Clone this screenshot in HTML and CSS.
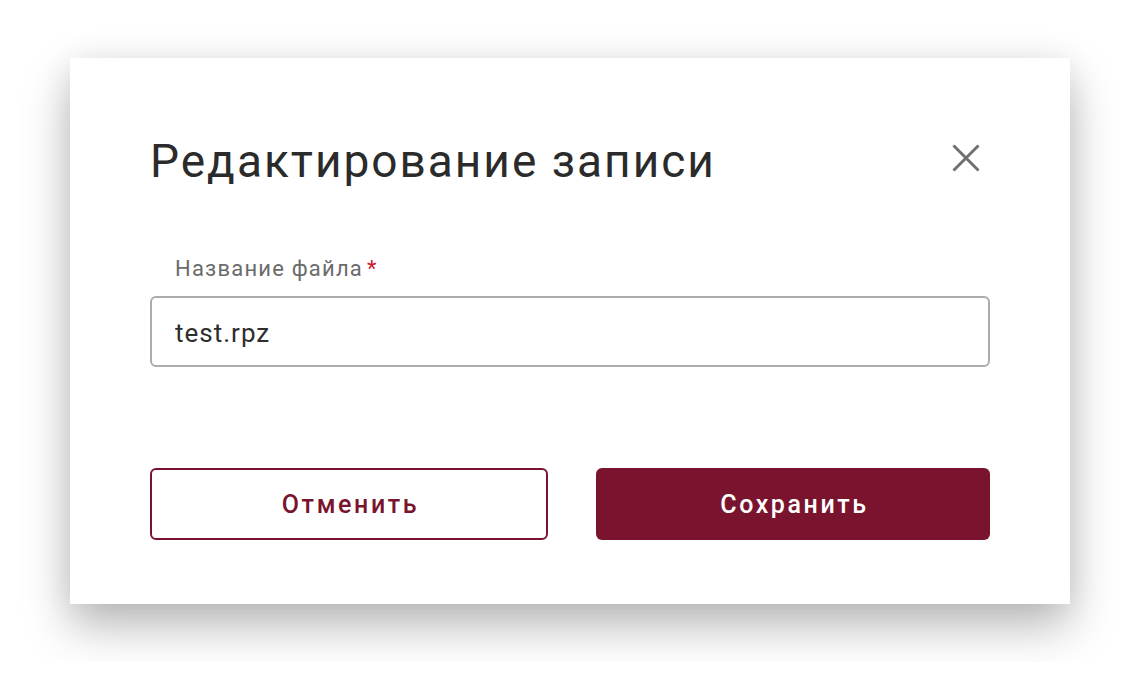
FILE: index.html
```html
<!DOCTYPE html>
<html lang="ru">
<head>
<meta charset="utf-8">
<title>Редактирование записи</title>
<link rel="stylesheet" href="styles.css">
</head>
<body>
<div class="dialog">
  <div class="dialog-header">
    <h1 class="dialog-title">Редактирование записи</h1>
    <button class="close-btn" type="button" aria-label="Закрыть">
      <svg width="28" height="28" viewBox="0 0 28 28"><path d="M1.5 1.5 L26.5 26.5 M26.5 1.5 L1.5 26.5" stroke="#707070" stroke-width="3" fill="none"/></svg>
    </button>
  </div>
  <div class="field">
    <label class="field-label">Название файла<span class="req">*</span></label>
    <input class="field-input" type="text" value="test.rpz">
  </div>
  <div class="actions">
    <button class="btn btn-outline" type="button">Отменить</button>
    <button class="btn btn-primary" type="button">Сохранить</button>
  </div>
</div>
</body>
</html>
```
FILE: styles.css
```css
html, body {
  margin: 0;
  padding: 0;
  background: #ffffff;
}
body {
  font-family: Roboto, "Liberation Sans", sans-serif;
  padding: 58px 70px;
}
.dialog {
  width: 1000px;
  height: 546px;
  box-sizing: border-box;
  background: #fff;
  padding: 73px 80px 64px;
  box-shadow: 0 22px 44px rgba(0, 0, 0, 0.28), 0 0 30px rgba(0, 0, 0, 0.06);
  display: flex;
  flex-direction: column;
}
.dialog-header {
  height: 60px;
  display: flex;
  justify-content: space-between;
  align-items: flex-start;
}
.dialog-title {
  margin: 0;
  font-size: 46px;
  line-height: 60px;
  font-weight: 400;
  color: #2b2b2b;
  letter-spacing: 2px;
}
.close-btn {
  width: 48px;
  height: 48px;
  margin-top: 3px;
  padding: 0;
  border: 0;
  background: transparent;
  display: flex;
  align-items: center;
  justify-content: center;
}
.field {
  margin-top: 66px;
  display: flex;
  flex-direction: column;
}
.field-label {
  font-size: 22px;
  line-height: 24px;
  color: #6b6b6b;
  padding-left: 25px;
  letter-spacing: 1.2px;
}
.req {
  color: #c8202f;
  margin-left: 4px;
}
.field-input {
  margin-top: 15px;
  height: 71px;
  box-sizing: border-box;
  border: 2px solid #acacac;
  border-radius: 6px;
  padding: 2px 23px 0;
  font-family: Roboto, "Liberation Sans", sans-serif;
  font-size: 26px;
  letter-spacing: 1px;
  color: #2e2e2e;
  outline: none;
}
.actions {
  margin-top: 101px;
  display: flex;
  gap: 48px;
}
.btn {
  flex: 1 1 0;
  height: 72px;
  box-sizing: border-box;
  border-radius: 6px;
  font-family: Roboto, "Liberation Sans", sans-serif;
  font-size: 25px;
  font-weight: 500;
  letter-spacing: 2.6px;
  padding: 0 0 0 3px;
}
.btn-outline {
  background: #fff;
  border: 2px solid #7a142e;
  color: #7a142e;
}
.btn-primary {
  background: #7a142e;
  border: 0;
  color: #fff;
}
```
